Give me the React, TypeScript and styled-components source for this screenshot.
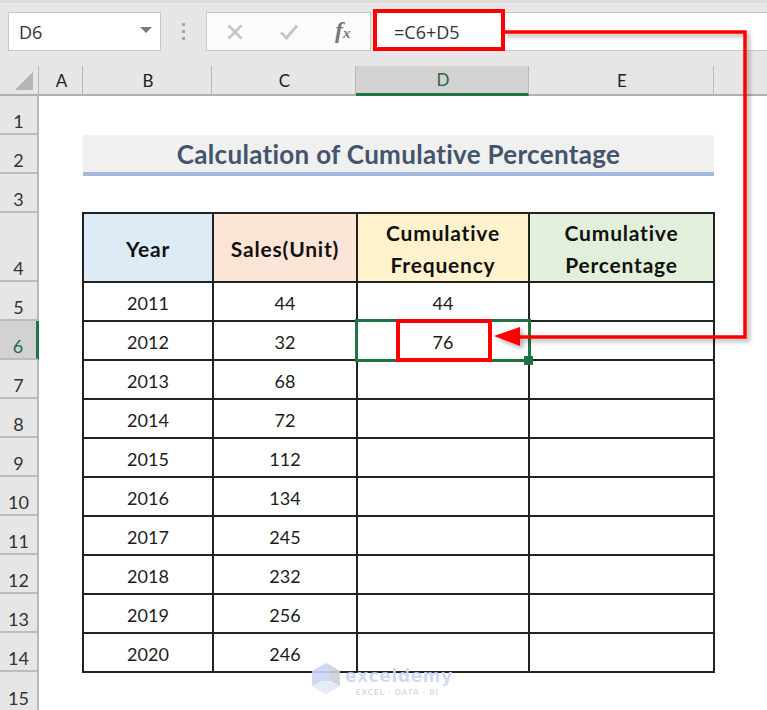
import React from 'react';
import styled, {createGlobalStyle} from 'styled-components';

const GlobalStyle = createGlobalStyle`
   html, body {
      margin: 0;
      padding: 0;
      background: #fff;
   }
   body {
      font-family: 'Lato', 'Liberation Sans', sans-serif;
   }
`;

const years = [
   ['2011', '44', '44'],
   ['2012', '32', '76'],
   ['2013', '68', ''],
   ['2014', '72', ''],
   ['2015', '112', ''],
   ['2016', '134', ''],
   ['2017', '245', ''],
   ['2018', '232', ''],
   ['2019', '256', ''],
   ['2020', '246', ''],
];

export default function App() {
   return (
      <Page>
         <GlobalStyle />
         <TopBar>
            <NameBox>
               <span>D6</span>
               <Caret />
            </NameBox>
            <Grip>
               <i />
               <i />
               <i />
            </Grip>
            <FormulaButtons>
               <svg width='16' height='16' viewBox='0 0 16 16'>
                  <path d='M1.5 1.5 L14.5 14.5 M14.5 1.5 L1.5 14.5' stroke='#c6c6c6' strokeWidth='2.6' fill='none' />
               </svg>
               <svg width='18' height='16' viewBox='0 0 18 16'>
                  <path d='M1 8.5 L6.5 14 L17 1.5' stroke='#c6c6c6' strokeWidth='3' fill='none' />
               </svg>
               <FxLabel>
                  f<small>x</small>
               </FxLabel>
            </FormulaButtons>
            <FormulaInput>=C6+D5</FormulaInput>
         </TopBar>

         <Sheet>
            <Corner>
               <svg width='18' height='18' viewBox='0 0 18 18'>
                  <path d='M18 0 V18 H0 Z' fill='#b5b5b5' />
               </svg>
            </Corner>
            <ColHead>A</ColHead>
            <ColHead>B</ColHead>
            <ColHead>C</ColHead>
            <ColHead $active>D</ColHead>
            <ColHead>E</ColHead>
            <ColHead $last />

            <RowHead>1</RowHead>
            <Blank $span={6} />

            <RowHead>2</RowHead>
            <Blank />
            <TitleCell>Calculation of Cumulative Percentage</TitleCell>
            <Blank />

            <RowHead>3</RowHead>
            <Blank $span={6} />

            <RowHead>4</RowHead>
            <Blank />
            <DataTable>
               <HeadCell $bg='#ddebf7'>Year</HeadCell>
               <HeadCell $bg='#fce4d6'>Sales(Unit)</HeadCell>
               <HeadCell $bg='#fff2cc'>
                  Cumulative
                  <br />
                  Frequency
               </HeadCell>
               <HeadCell $bg='#e2efda'>
                  Cumulative
                  <br />
                  Percentage
               </HeadCell>
               {years.map((row) => (
                  <React.Fragment key={row[0]}>
                     <Cell>{row[0]}</Cell>
                     <Cell>{row[1]}</Cell>
                     <Cell>{row[2]}</Cell>
                     <Cell />
                  </React.Fragment>
               ))}
            </DataTable>
            <TableGutter />

            {years.map((row, index) => (
               <RowHead key={row[0]} $active={index === 1} style={{gridRow: index + 6, gridColumn: 1}}>
                  {index + 5}
               </RowHead>
            ))}

            <RowHead style={{gridRow: 16, gridColumn: 1}}>15</RowHead>
         </Sheet>

         {/* selected cell + red callout drawn over the sheet */}
         <SelectedCell />
         <FillHandle />
         <Callout width='767' height='710' viewBox='0 0 767 710'>
            <defs>
               <filter id='soft' x='-5%' y='-5%' width='110%' height='110%'>
                  <feDropShadow dx='3' dy='3' stdDeviation='2' floodColor='#000' floodOpacity='0.3' />
               </filter>
            </defs>
            <g filter='url(#soft)'>
               <path d='M504 32 H745 V337 H515' fill='none' stroke='#f00' strokeWidth='3.5' />
               <path d='M494 336 L520 327 L520 346 Z' fill='#f00' />
            </g>
            <rect x='375' y='11' width='128' height='38' fill='none' stroke='#f00' strokeWidth='4' />
            <rect x='398' y='321' width='92' height='39' fill='none' stroke='#f00' strokeWidth='4' />
         </Callout>

         <Watermark>
            <svg width='28' height='31' viewBox='0 0 28 31'>
               <path d='M14 0 L28 8 V23 L14 31 L0 23 V8 Z' fill='#c9d6f2' />
               <path d='M14 0 L28 8 V23 L19 18 V11 Z' fill='#cfcfd6' />
               <path d='M0 23 L9 18 L19 18 L28 23 L14 31 Z' fill='#e3ebf3' />
            </svg>
            <WatermarkText>
               <WatermarkName>exceldemy</WatermarkName>
               <WatermarkTag>EXCEL - DATA - BI</WatermarkTag>
            </WatermarkText>
         </Watermark>
      </Page>
   );
}

const Page = styled.div`
   position: relative;
   width: 767px;
   height: 710px;
   overflow: hidden;
   background: #fff;
`;

const TopBar = styled.div`
   display: flex;
   align-items: stretch;
   height: 66px;
   padding-top: 9px;
   padding-bottom: 15px;
   box-sizing: border-box;
   background: #e6e6e6;
   border-top: 3px solid #dcdcdc;
`;

const NameBox = styled.div`
   display: flex;
   align-items: center;
   justify-content: space-between;
   width: 153px;
   margin-left: 8px;
   padding: 0 8px 0 10px;
   box-sizing: border-box;
   background: #fff;
   border: 1px solid #c8c8c8;
   font-family: 'Open Sans', sans-serif;
   font-size: 18px;
   color: #333;
`;

const Caret = styled.div`
   width: 0;
   height: 0;
   border-left: 6px solid transparent;
   border-right: 6px solid transparent;
   border-top: 6px solid #7a7a7a;
   margin-bottom: 4px;
`;

const Grip = styled.div`
   display: flex;
   flex-direction: column;
   justify-content: center;
   gap: 4px;
   width: 45px;
   align-items: center;

   i {
      width: 3px;
      height: 3px;
      background: #a8a8a8;
   }
`;

const FormulaButtons = styled.div`
   display: flex;
   align-items: center;
   gap: 37px;
   width: 165px;
   padding-left: 20px;
   box-sizing: border-box;
   background: #fbfbfb;
   border: 1px solid #c8c8c8;
`;

const FxLabel = styled.span`
   font-family: 'Liberation Serif', serif;
   font-style: italic;
   font-weight: bold;
   font-size: 24px;
   line-height: 24px;
   color: #777;

   small {
      font-size: 15px;
   }
`;

const FormulaInput = styled.div`
   display: flex;
   align-items: center;
   flex: 1;
   margin-left: 2px;
   padding-left: 21px;
   background: #fff;
   border-top: 1px solid #c8c8c8;
   border-bottom: 1px solid #c8c8c8;
   font-family: 'Open Sans', sans-serif;
   font-size: 18px;
   color: #333;
`;

const Sheet = styled.div`
   display: grid;
   grid-template-columns: 39px 44px 129px 144px 173px 185px 53px;
   grid-template-rows: 30px 39px 39px 39px 69px repeat(10, 39px) 40px;
`;

const Corner = styled.div`
   display: flex;
   align-items: flex-end;
   justify-content: flex-end;
   padding: 0 5px 4px 0;
   box-sizing: border-box;
   background: #e6e6e6;
   border-right: 1px solid #b8b8b8;
   border-bottom: 2px solid #b0b0b0;
`;

const ColHead = styled.div<{$active?: boolean; $last?: boolean}>`
   display: flex;
   align-items: center;
   justify-content: center;
   padding-left: 2px;
   box-sizing: border-box;
   font-size: 17px;
   color: ${(p) => (p.$active ? '#1f6b45' : '#222')};
   background: ${(p) => (p.$active ? '#d2d2d2' : '#e6e6e6')};
   border-right: ${(p) => (p.$last ? 'none' : '1px solid #b8b8b8')};
   border-bottom: ${(p) => (p.$active ? '3px solid #217346' : '2px solid #b0b0b0')};
`;

const RowHead = styled.div<{$active?: boolean}>`
   display: flex;
   align-items: flex-end;
   justify-content: center;
   padding-bottom: 1px;
   box-sizing: border-box;
   grid-column: 1;
   font-size: 18px;
   color: ${(p) => (p.$active ? '#1f6b45' : '#333')};
   background: ${(p) => (p.$active ? '#d2d2d2' : '#e6e6e6')};
   border-right: ${(p) => (p.$active ? '3px solid #217346' : '2px solid #b8b8b8')};
   border-bottom: 2px solid #bcbcbc;
`;

const Blank = styled.div<{$span?: number}>`
   grid-column: span ${(p) => p.$span ?? 1};
`;

const TitleCell = styled.div`
   grid-column: span 4;
   display: flex;
   align-items: center;
   justify-content: center;
   margin-bottom: -2px;
   background: #f0f0f0;
   border-bottom: 4px solid #a4b8e0;
   font-size: 26px;
   letter-spacing: 0.3px;
   font-weight: bold;
   color: #44546a;
`;

const DataTable = styled.div`
   grid-column: 3 / span 4;
   grid-row: 5 / span 11;
   display: grid;
   grid-template-columns: 130px 144px 172px 185px;
   grid-template-rows: 69px repeat(10, 39px);
   border-top: 2px solid #222;
   border-left: 2px solid #222;
   margin-left: -1px;
   margin-top: -1px;
   box-sizing: border-box;
   width: 633px;
   height: 461px;
`;

const TableGutter = styled.div`
   grid-column: 7;
`;

const Cell = styled.div`
   display: flex;
   align-items: center;
   justify-content: center;
   padding-top: 2px;
   box-sizing: border-box;
   border-right: 2px solid #222;
   border-bottom: 2px solid #222;
   font-size: 18px;
   color: #1c1c1c;
`;

const HeadCell = styled(Cell)<{$bg: string}>`
   padding-top: 3px;
   text-align: center;
   line-height: 32px;
   font-weight: bold;
   font-size: 21px;
   letter-spacing: 0.8px;
   color: #111;
   background: ${(p) => p.$bg};
`;

const SelectedCell = styled.div`
   position: absolute;
   left: 355px;
   top: 319px;
   width: 176px;
   height: 43px;
   box-sizing: border-box;
   border: 3px solid #217346;
`;

const FillHandle = styled.div`
   position: absolute;
   left: 524px;
   top: 356px;
   width: 9px;
   height: 9px;
   background: #217346;
`;

const Callout = styled.svg`
   position: absolute;
   left: 0;
   top: 0;
   pointer-events: none;
`;

const Watermark = styled.div`
   position: absolute;
   left: 312px;
   top: 663px;
   display: flex;
   gap: 5px;
   align-items: flex-start;
   opacity: 0.9;
`;

const WatermarkText = styled.div`
   padding-top: 4px;
`;

const WatermarkName = styled.div`
   font-family: 'DejaVu Sans', sans-serif;
   font-size: 17px;
   letter-spacing: 0.6px;
   font-weight: bold;
   line-height: 19px;
   color: #cbd7f6;
`;

const WatermarkTag = styled.div`
   margin-top: 1px;
   margin-left: 11px;
   font-size: 8px;
   font-weight: bold;
   letter-spacing: 1.05px;
   color: #d4d4d4;
   line-height: 10px;
`;
